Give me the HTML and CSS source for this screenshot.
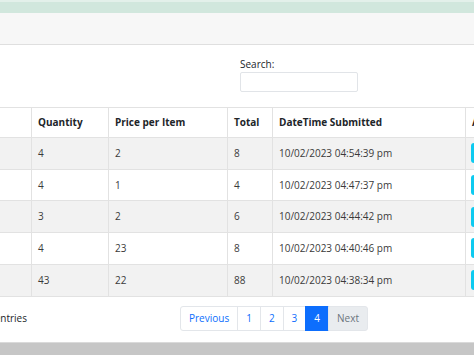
FILE: index.html
```html
<!DOCTYPE html>
<html lang="en">
  <head>
    <meta charset="UTF-8" />
    <meta name="viewport" content="width=device-width, initial-scale=1.0" />
    <title>Orders</title>
    <link rel="stylesheet" href="styles.css">
  </head>
  <body>
    <div class="alert-strip"></div>
    <div class="toolbar"></div>

    <div class="content">
      <!-- =搜尋列=== -->
      <div class="filter-row">
        <div class="length"></div>
        <div class="filter">
          <label for="search">Search:</label>
          <input id="search" type="search" />
        </div>
      </div>

      <table class="data-table">
        <colgroup>
          <col class="c-id" />
          <col class="c-qty" />
          <col class="c-price" />
          <col class="c-total" />
          <col class="c-date" />
          <col class="c-action" />
        </colgroup>
        <thead>
          <tr>
            <th>#</th>
            <th>Quantity</th>
            <th>Price per Item</th>
            <th>Total</th>
            <th>DateTime Submitted</th>
            <th>Action</th>
          </tr>
        </thead>
        <tbody>
          <tr>
            <td>16</td>
            <td>4</td>
            <td>2</td>
            <td>8</td>
            <td>10/02/2023 04:54:39 pm</td>
            <td><button type="button" class="btn-info">View</button></td>
          </tr>
          <tr>
            <td>17</td>
            <td>4</td>
            <td>1</td>
            <td>4</td>
            <td>10/02/2023 04:47:37 pm</td>
            <td><button type="button" class="btn-info">View</button></td>
          </tr>
          <tr>
            <td>18</td>
            <td>3</td>
            <td>2</td>
            <td>6</td>
            <td>10/02/2023 04:44:42 pm</td>
            <td><button type="button" class="btn-info">View</button></td>
          </tr>
          <tr>
            <td>19</td>
            <td>4</td>
            <td>23</td>
            <td>8</td>
            <td>10/02/2023 04:40:46 pm</td>
            <td><button type="button" class="btn-info">View</button></td>
          </tr>
          <tr>
            <td>20</td>
            <td>43</td>
            <td>22</td>
            <td>88</td>
            <td>10/02/2023 04:38:34 pm</td>
            <td><button type="button" class="btn-info">View</button></td>
          </tr>
        </tbody>
      </table>

      <!-- =分頁=== -->
      <div class="bottom-row">
        <div class="info">Showing 16 to 20 of 20 entries</div>
        <ul class="pagination">
          <li class="page-item"><a class="page-link" href="#">Previous</a></li>
          <li class="page-item"><a class="page-link" href="#">1</a></li>
          <li class="page-item"><a class="page-link" href="#">2</a></li>
          <li class="page-item"><a class="page-link" href="#">3</a></li>
          <li class="page-item active"><a class="page-link" href="#">4</a></li>
          <li class="page-item disabled"><a class="page-link" href="#">Next</a></li>
        </ul>
      </div>
    </div>

    <div class="footer-bar"></div>
  </body>
</html>
```

FILE: styles.css
```css
* {
  margin: 0;
  padding: 0;
  box-sizing: border-box;
}
html,
body {
  overflow: hidden;
}
body {
  font-family: "Open Sans", "Liberation Sans", sans-serif;
  font-size: 10px;
  color: #212529;
  background-color: #fff;
}
.alert-strip {
  height: 13px;
  padding-top: 2px;
  background-color: #e3f0ea;
  border-bottom: 11px solid #d1e7dd;
  box-shadow: inset 0 2px 0 #e3f0ea, inset 0 3px 0 #bcdacb;
}
.toolbar {
  height: 32px;
  background-color: #f7f7f7;
  border-bottom: 1px solid #dfdfdf;
}

/* ===搜尋=== */
.filter-row {
  display: grid;
  grid-template-columns: 1fr 1fr;
  padding-top: 12px;
}
.filter {
  padding-left: 3px;
}
.filter label {
  display: block;
  line-height: 14px;
  margin-bottom: 1px;
}
.filter input {
  display: block;
  width: 118px;
  height: 20px;
  border: 1px solid #e1e4e8;
  border-radius: 2px;
  background-color: #fff;
}

/* ===表格=== */
.data-table {
  margin-top: 15px;
  margin-left: -69px;
  width: 653px;
  table-layout: fixed;
  border-collapse: collapse;
}
.c-id {
  width: 100px;
}
.c-qty {
  width: 77px;
}
.c-price {
  width: 119px;
}
.c-total {
  width: 45px;
}
.c-date {
  width: 193px;
}
.c-action {
  width: 119px;
}
.data-table th,
.data-table td {
  border: 1px solid #e2e2e2;
  padding: 6px;
  text-align: left;
  white-space: nowrap;
  overflow: hidden;
}
.data-table th {
  font-weight: 700;
  line-height: 17px;
}
.data-table td {
  line-height: 18.7px;
  color: #3a3a3a;
}
.data-table tbody tr:nth-child(odd) td {
  background-color: #f2f2f2;
}
.btn-info {
  display: block;
  height: 20px;
  padding: 0 8px;
  margin: -1px 0 -1px -1px;
  border: none;
  border-radius: 3px;
  background-color: #0dcaf0;
  color: #000;
  font: inherit;
}

/* ===分頁=== */
.bottom-row {
  display: flex;
  align-items: center;
  margin-top: 9px;
}
.info {
  width: 200px;
  margin-left: -173px;
  text-align: right;
  line-height: 14px;
}
.pagination {
  display: flex;
  list-style: none;
  margin-left: 153px;
}
.page-link {
  display: block;
  padding: 0 8px;
  line-height: 23px;
  color: #0d6efd;
  text-decoration: none;
  background-color: #fff;
  border: 1px solid #e3e6ea;
  margin-left: -1px;
}
.page-item:first-child .page-link {
  margin-left: 0;
  border-radius: 3px 0 0 3px;
}
.page-item:last-child .page-link {
  border-radius: 0 3px 3px 0;
}
.page-item.active .page-link {
  background-color: #0d6efd;
  border-color: #0d6efd;
  color: #fff;
}
.page-item.disabled .page-link {
  background-color: #e9ecef;
  border-color: #e3e6ea;
  color: #6c757d;
}

.footer-bar {
  margin-top: 11px;
  height: 14px;
  background-color: #c6c6c6;
  border-top: 1px solid #dadada;
}
```
